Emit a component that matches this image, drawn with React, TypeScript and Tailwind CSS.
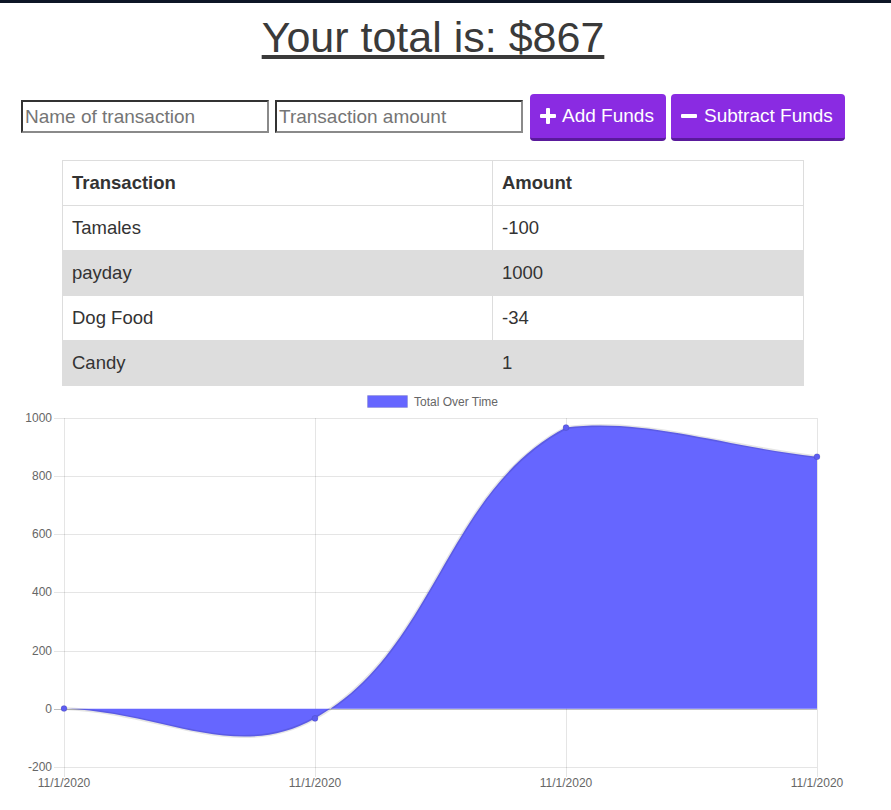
import React from 'react';

const rows = [
  { name: 'Tamales', amount: '-100' },
  { name: 'payday', amount: '1000' },
  { name: 'Dog Food', amount: '-34' },
  { name: 'Candy', amount: '1' },
];

const yTicks = [1000, 800, 600, 400, 200, 0, -200];
const yOf = (v: number) => 708.8 - v * 0.29083;
const xs = [64, 315, 566, 817];
const points: [number, number][] = [
  [64, 708.5],
  [315, 718.4],
  [566, 427.6],
  [817, 456.7],
];

const curve =
  'M64 708.5 C164.4 712.5 235.6 762.8 315 718.4 C436.4 650.5 444.9 490.7 566 427.6 C645.7 418 716.6 445.1 817 456.7';

function Chart() {
  return (
    <svg width={866} height={422} viewBox="0 388 866 422" className="block">
      {/* legend */}
      <rect x={367.5} y={395.5} width={40} height={12} fill="#6666ff" stroke="rgba(0,0,0,0.1)" />
      <text x={414} y={405.5} fontSize={12} fill="#666" fontFamily="'Liberation Sans', Arial, sans-serif">
        Total Over Time
      </text>

      {/* grid */}
      {yTicks.map((v) => (
        <g key={v}>
          <line
            x1={54}
            x2={817}
            y1={Math.round(yOf(v)) + 0.5}
            y2={Math.round(yOf(v)) + 0.5}
            stroke={v === 0 ? 'rgba(0,0,0,0.25)' : 'rgba(0,0,0,0.1)'}
          />
          <text
            x={52}
            y={yOf(v) + 4}
            fontSize={12}
            fill="#666"
            textAnchor="end"
            fontFamily="'Liberation Sans', Arial, sans-serif"
          >
            {v}
          </text>
        </g>
      ))}
      {xs.map((x) => (
        <g key={x}>
          <line x1={x + 0.5} x2={x + 0.5} y1={418} y2={777} stroke="rgba(0,0,0,0.1)" />
          <text
            x={x}
            y={787}
            fontSize={12}
            fill="#666"
            textAnchor="middle"
            fontFamily="'Liberation Sans', Arial, sans-serif"
          >
            11/1/2020
          </text>
        </g>
      ))}

      {/* area */}
      <path d={`${curve} L817 708.8 L64 708.8 Z`} fill="#6666ff" />
      <path d={curve} fill="none" stroke="rgba(0,0,0,0.1)" strokeWidth={3} />
      {points.map(([x, y]) => (
        <circle key={x} cx={x} cy={y} r={3} fill="#5d5df0" stroke="rgba(0,0,0,0.1)" />
      ))}
    </svg>
  );
}

function PlusIcon() {
  return (
    <svg width={16} height={16} viewBox="0 0 16 16" className="shrink-0">
      <rect x={6} y={0} width={4} height={16} rx={1} fill="white" />
      <rect x={0} y={6} width={16} height={4} rx={1} fill="white" />
    </svg>
  );
}

function MinusIcon() {
  return (
    <svg width={16} height={16} viewBox="0 0 16 16" className="shrink-0">
      <rect x={0} y={6} width={16} height={4} rx={1} fill="white" />
    </svg>
  );
}

export default function App() {
  return (
    <div className="min-h-screen bg-white font-['Liberation_Sans',Arial,sans-serif] text-[#333]">
      <div className="h-[3px] bg-[#0d1626]" />
      <div className="w-[866px]">
        <h1 className="mt-[13px] text-center text-[43px] leading-[43px] font-normal text-[#3a3a3a] underline">
          Your total is: $867
        </h1>

        <div className="mt-[35px] flex items-start pl-[21px]">
          <input
            placeholder="Name of transaction"
            className="mt-[6px] h-[33px] w-[248px] border-2 border-t-[#333] border-l-[#333] border-b-[#8a8a8a] border-r-[#8a8a8a] px-[2px] text-[19px] placeholder:text-[#757575] outline-none"
          />
          <input
            placeholder="Transaction amount"
            className="ml-[6px] mt-[6px] h-[33px] w-[248px] border-2 border-t-[#333] border-l-[#333] border-b-[#8a8a8a] border-r-[#8a8a8a] px-[2px] text-[19px] placeholder:text-[#757575] outline-none"
          />
          <button className="ml-[7px] flex h-[47px] w-[136px] items-center gap-[6px] rounded-[4px] border-b-[3px] border-[#5a1a9c] bg-[#8a2be2] pl-[10px] text-[19px] text-white">
            <PlusIcon />
            Add Funds
          </button>
          <button className="ml-[5px] flex h-[47px] w-[174px] items-center gap-[7px] rounded-[4px] border-b-[3px] border-[#5a1a9c] bg-[#8a2be2] pl-[10px] text-[19px] text-white">
            <MinusIcon />
            Subtract Funds
          </button>
        </div>

        <div className="mx-auto mt-[19px] w-[742px] border border-[#dddddd] text-[18.5px] text-[#333]">
          <div className="grid h-[44px] grid-cols-[430px_1fr] font-bold">
            <div className="flex items-center border-r border-[#dddddd] px-[9px]">Transaction</div>
            <div className="flex items-center px-[9px]">Amount</div>
          </div>
          {rows.map((r, i) => (
            <div
              key={r.name}
              className={`grid h-[45px] grid-cols-[430px_1fr] border-t border-[#dddddd] ${
                i % 2 === 1 ? 'bg-[#dddddd]' : 'bg-white'
              }`}
            >
              <div className="flex items-center border-r border-[#dddddd] px-[9px]">{r.name}</div>
              <div className="flex items-center px-[9px]">{r.amount}</div>
            </div>
          ))}
        </div>

        <div className="mt-[2px]">
          <Chart />
        </div>
      </div>
    </div>
  );
}
